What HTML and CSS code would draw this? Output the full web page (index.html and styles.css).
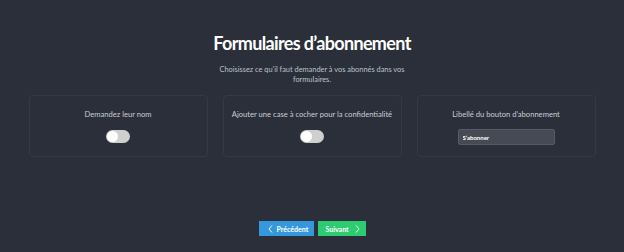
FILE: index.html
```html
<!DOCTYPE html>
<html lang="fr">
<head>
  <meta charset="UTF-8" />
  <meta name="viewport" content="width=device-width, initial-scale=1.0" />
  <title>Formulaires d'abonnement</title>
  <link rel="stylesheet" href="styles.css">
</head>
<body>
  <div class="page">
    <h1>Formulaires d’abonnement</h1>
    <p class="intro">Choisissez ce qu’il faut demander à vos abonnés dans vos formulaires.</p>

    <div class="options">
      <div class="option">
        <h3>Demandez leur nom</h3>
        <label class="toggle"><span class="knob"></span></label>
      </div>
      <div class="option">
        <h3>Ajouter une case à cocher pour la confidentialité</h3>
        <label class="toggle"><span class="knob"></span></label>
      </div>
      <div class="option">
        <h3>Libellé du bouton d’abonnement</h3>
        <input class="text-input" type="text" value="S’abonner">
      </div>
    </div>

    <div class="nav">
      <button class="btn btn-prev">
        <svg width="5" height="8" viewBox="0 0 5 8"><polyline points="4,0.5 1,4 4,7.5" fill="none" stroke="#fff" stroke-width="0.9"/></svg>
        Précédent
      </button>
      <button class="btn btn-next">
        Suivant
        <svg width="5" height="8" viewBox="0 0 5 8"><polyline points="1,0.5 4,4 1,7.5" fill="none" stroke="#fff" stroke-width="0.9"/></svg>
      </button>
    </div>
  </div>
</body>
</html>
```

FILE: styles.css
```css
* {
  margin: 0;
  padding: 0;
  box-sizing: border-box;
}
body {
  background-color: #2a2f39;
  font-family: 'Lato', sans-serif;
  color: #f0f0f0;
  width: 624px;
  height: 252px;
  overflow: hidden;
}
.page {
  display: flex;
  flex-direction: column;
  align-items: center;
  padding-top: 32px;
}
h1 {
  font-size: 18px;
  font-weight: 700;
  color: #ffffff;
  line-height: 22px;
  letter-spacing: -0.65px;
}
.intro {
  margin-top: 11px;
  width: 200px;
  text-align: center;
  font-size: 7.4px;
  line-height: 10px;
  color: #bcc3ce;
}
.options {
  margin-top: 10px;
  display: grid;
  grid-template-columns: repeat(3, 179px);
  gap: 15px;
}
.option {
  height: 62px;
  border: 1px solid #343a45;
  border-radius: 4px;
  display: flex;
  flex-direction: column;
  align-items: center;
  padding-top: 13px;
}
.option h3 {
  font-size: 7.6px;
  font-weight: 400;
  line-height: 10px;
  color: #c9ced6;
}
.toggle {
  margin-top: 11px;
  width: 24px;
  height: 13px;
  border-radius: 7px;
  background-color: #cfcfcf;
  display: flex;
  align-items: center;
  padding-left: 1px;
  cursor: pointer;
}
.knob {
  width: 11px;
  height: 11px;
  border-radius: 50%;
  background-color: #ffffff;
}
.text-input {
  margin-top: 10px;
  width: 97px;
  height: 16px;
  background-color: #464a54;
  border: 1px solid #555a64;
  border-radius: 2px;
  color: #ffffff;
  font-family: 'Lato', sans-serif;
  font-size: 6px;
  font-weight: 700;
  padding-left: 4px;
  outline: none;
}
.nav {
  margin-top: 64px;
  display: flex;
  gap: 4px;
}
.btn {
  height: 15px;
  border: none;
  color: #ffffff;
  font-family: 'Lato', sans-serif;
  font-size: 7px;
  font-weight: 700;
  display: flex;
  align-items: center;
  gap: 4px;
  cursor: pointer;
}
.btn-prev {
  width: 55px;
  background-color: #3498db;
  padding-left: 9px;
}
.btn-next {
  width: 48px;
  background-color: #2ecc71;
  padding-left: 8px;
  gap: 6px;
}
```
